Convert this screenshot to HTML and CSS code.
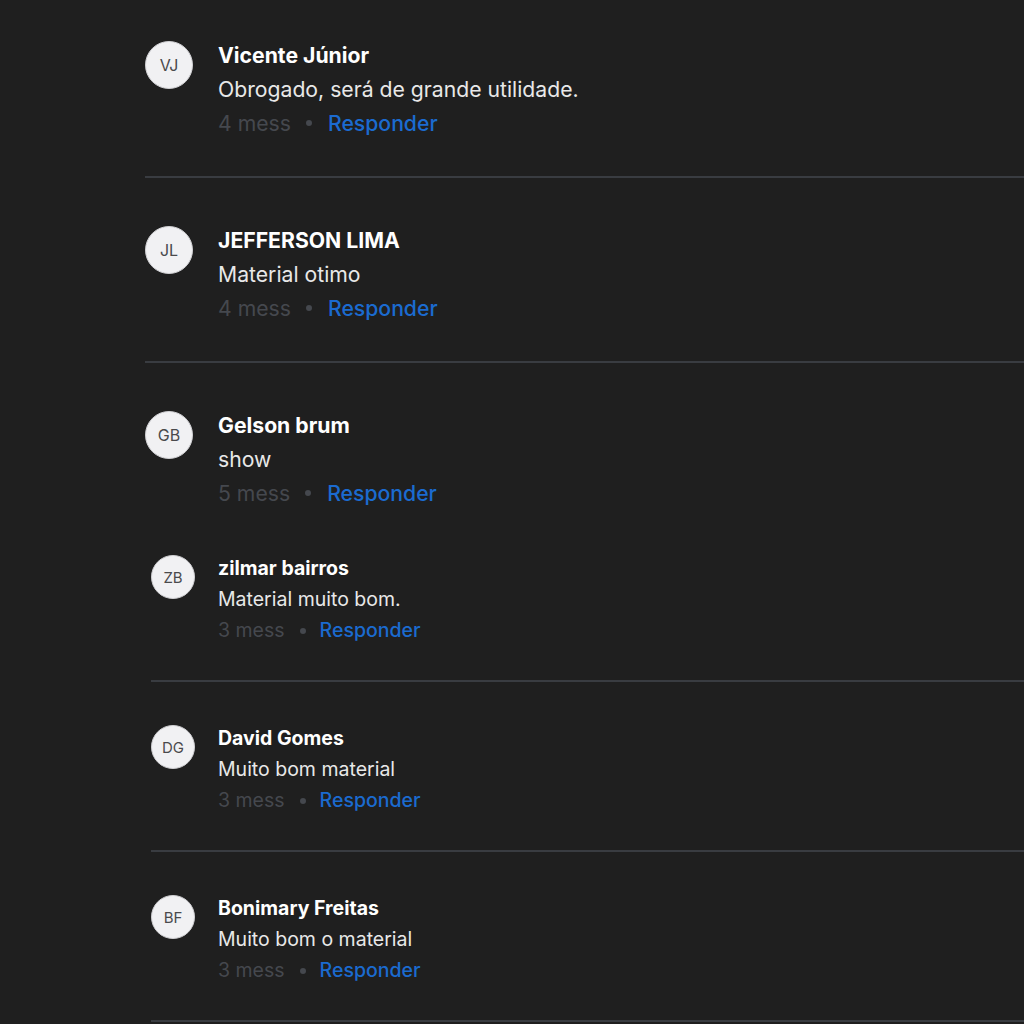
FILE: index.html
```html
<!DOCTYPE html>
<html lang="pt-BR">
<head>
<meta charset="utf-8">
<title>Comentários</title>
<link rel="stylesheet" href="styles.css">
</head>
<body>
<main class="page">
  <section class="thread thread-lg">
    <article class="comment">
      <div class="avatar">VJ</div>
      <div class="body">
        <div class="name">Vicente Júnior</div>
        <div class="text">Obrogado, será de grande utilidade.</div>
        <div class="meta"><span class="time">4 mess</span><span class="dot"></span><a class="reply">Responder</a></div>
      </div>
    </article>
    <article class="comment">
      <div class="avatar">JL</div>
      <div class="body">
        <div class="name">JEFFERSON LIMA</div>
        <div class="text">Material otimo</div>
        <div class="meta"><span class="time">4 mess</span><span class="dot"></span><a class="reply">Responder</a></div>
      </div>
    </article>
    <article class="comment no-border">
      <div class="avatar">GB</div>
      <div class="body">
        <div class="name">Gelson brum</div>
        <div class="text">show</div>
        <div class="meta"><span class="time">5 mess</span><span class="dot"></span><a class="reply">Responder</a></div>
      </div>
    </article>
  </section>
  <section class="thread thread-sm">
    <article class="comment">
      <div class="avatar">ZB</div>
      <div class="body">
        <div class="name">zilmar bairros</div>
        <div class="text">Material muito bom.</div>
        <div class="meta"><span class="time">3 mess</span><span class="dot"></span><a class="reply">Responder</a></div>
      </div>
    </article>
    <article class="comment">
      <div class="avatar">DG</div>
      <div class="body">
        <div class="name">David Gomes</div>
        <div class="text">Muito bom material</div>
        <div class="meta"><span class="time">3 mess</span><span class="dot"></span><a class="reply">Responder</a></div>
      </div>
    </article>
    <article class="comment">
      <div class="avatar">BF</div>
      <div class="body">
        <div class="name">Bonimary Freitas</div>
        <div class="text">Muito bom o material</div>
        <div class="meta"><span class="time">3 mess</span><span class="dot"></span><a class="reply">Responder</a></div>
      </div>
    </article>
  </section>
</main>
</body>
</html>
```

FILE: styles.css
```css
html, body {
  margin: 0;
  padding: 0;
  background: #1f1f1f;
}
body {
  font-family: Inter, "Noto Sans", sans-serif;
  width: 1024px;
  height: 1024px;
  overflow: hidden;
}
.page {
  display: flex;
  flex-direction: column;
}
.thread {
  display: flex;
  flex-direction: column;
}
.comment {
  display: flex;
  align-items: flex-start;
  border-bottom: 2px solid #393c41;
}
.comment.no-border {
  border-bottom: none;
}
.avatar {
  flex: none;
  border-radius: 50%;
  background: #f1f1f3;
  border: 1px solid #cfcfd2;
  box-sizing: border-box;
  display: flex;
  align-items: center;
  justify-content: center;
  color: #4a4a4c;
  font-weight: 400;
}
.body {
  display: flex;
  flex-direction: column;
}
.name {
  color: #ffffff;
  font-weight: 700;
}
.text {
  color: #e8e8e8;
}
.meta {
  display: flex;
  align-items: center;
}
.time {
  color: #45484e;
}
.dot {
  width: 6px;
  height: 6px;
  border-radius: 50%;
  background: #45484e;
}
.reply {
  color: #1b6bd0;
  font-weight: 500;
  cursor: pointer;
}

/* large section */
.thread-lg {
  margin-left: 145px;
}
.thread-lg .comment {
  padding: 45px 0 36px;
}
.thread-lg .comment:first-child {
  padding-top: 38px;
}
.thread-lg .comment.no-border {
  padding-bottom: 43px;
}
.thread-lg .avatar {
  width: 48px;
  height: 48px;
  margin-top: 3px;
  margin-right: 25px;
  font-size: 16px;
}
.thread-lg .body {
  font-size: 21.2px;
  line-height: 34px;
}
.thread-lg .dot {
  margin: 0 16px 0 15px;
}

/* small section */
.thread-sm {
  margin-left: 151px;
}
.thread-sm .comment {
  padding: 41px 0 34px;
}
.thread-sm .comment:first-child {
  padding-top: 0;
}
.thread-sm .avatar {
  width: 44px;
  height: 44px;
  margin-top: 2px;
  margin-right: 23px;
  font-size: 15px;
}
.thread-sm .body {
  font-size: 19.5px;
  line-height: 31px;
}
.thread-sm .dot {
  margin: 0 14px 0 15px;
}
```
